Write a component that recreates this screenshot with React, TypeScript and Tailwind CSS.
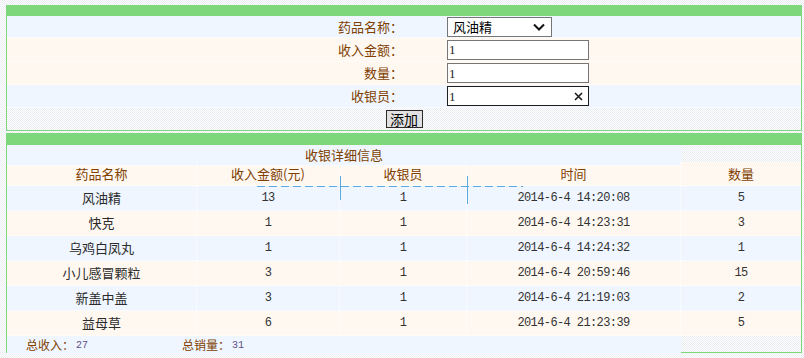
import React from 'react';

const cjk = "font-['Noto_Sans_CJK_SC','Liberation_Sans',sans-serif]";
const mono = "font-['Liberation_Mono',monospace]";

const records = [
  ['风油精', '13', '1', '2014-6-4 14:20:08', '5'],
  ['快克', '1', '1', '2014-6-4 14:23:31', '3'],
  ['乌鸡白凤丸', '1', '1', '2014-6-4 14:24:32', '1'],
  ['小儿感冒颗粒', '3', '1', '2014-6-4 20:59:46', '15'],
  ['新盖中盖', '3', '1', '2014-6-4 21:19:03', '2'],
  ['益母草', '6', '1', '2014-6-4 21:23:39', '5'],
];

function FormRow({ label, bg, h, children }: { label: string; bg: string; h: string; children: React.ReactNode }) {
  return (
    <div className={`grid grid-cols-[396px_1fr] ${h} ${bg} border-b border-dotted border-white`}>
      <div className={`${cjk} flex items-center justify-end text-[13px] text-[#804000]`}>{label}</div>
      <div className="flex items-center pl-[44px]">{children}</div>
    </div>
  );
}

function TextBox({ value, focused }: { value: string; focused?: boolean }) {
  return (
    <div
      className={`flex h-[20px] w-[142px] items-center justify-between border bg-white pl-[1px] pr-[5px] ${
        focused ? 'border-[#1e1e1e]' : 'border-[#767676]'
      }`}
    >
      <span className="font-['Liberation_Serif',serif] text-[13px] leading-none text-[#222]">{value}</span>
      {focused && (
        <svg width="9" height="9" viewBox="0 0 9 9">
          <path d="M1 1 L8 8 M8 1 L1 8" stroke="#1a1a1a" strokeWidth="1.6" />
        </svg>
      )}
    </div>
  );
}

export default function App() {
  const cols = 'grid grid-cols-[190px_143px_127px_214px_120px]';
  return (
    <div className="relative h-[358px] w-[804px] overflow-hidden bg-[repeating-conic-gradient(#ffffff_0_25%,#e9edf1_0_50%)] bg-[length:2px_2px] pl-[6px] pr-[2px] pt-[5px]">
      {/* form panel */}
      <div className="border border-[#7ed77a]">
        <div className="h-[10px] bg-[#7ed77a]" />
        <FormRow label="药品名称：" bg="bg-[#eff6ff]" h="h-[22px]">
          <div className="flex h-[20px] w-[105px] items-center justify-between border border-[#767676] bg-white pl-[5px] pr-[6px]">
            <span className={`${cjk} text-[13px] leading-none text-black`}>风油精</span>
            <svg width="12" height="8" viewBox="0 0 12 8">
              <path d="M1 1.5 L6 6.5 L11 1.5" fill="none" stroke="#111" strokeWidth="2" />
            </svg>
          </div>
        </FormRow>
        <FormRow label="收入金额：" bg="bg-[#fff8f1]" h="h-[24px]">
          <TextBox value="1" />
        </FormRow>
        <FormRow label="数量：" bg="bg-[#fff8f1]" h="h-[23px]">
          <TextBox value="1" />
        </FormRow>
        <FormRow label="收银员：" bg="bg-[#eff6ff]" h="h-[23px]">
          <TextBox value="1" focused />
        </FormRow>
        <div className="flex h-[22px] items-center justify-center">
          <button className={`${cjk} flex h-[18px] w-[37px] items-center justify-center border border-[#2a2a2a] bg-[#e1e1e1] text-[14px] leading-none text-black`}>
            添加
          </button>
        </div>
      </div>

      {/* detail panel */}
      <div className="mt-[2px] border border-[#7ed77a]">
        <div className="h-[11px] bg-[#7ed77a]" />
        <div className="grid h-[17px] grid-cols-[674px_120px]">
          <div className={`${cjk} flex items-center justify-center border-b border-dotted border-white bg-[#eff6ff] text-[13px] text-[#804000]`}>
            收银详细信息
          </div>
          <div />
        </div>
        <div className={`${cols} h-[24px] bg-[#fff8f1]`}>
          {['药品名称', '收入金额(元)', '收银员', '时间', '数量'].map((t, i) => (
            <div
              key={t}
              className={`${cjk} flex items-center justify-center border-b border-dotted border-white text-[13px] text-[#804000] ${
                i < 4 ? 'border-r' : ''
              }`}
            >
              {t}
            </div>
          ))}
        </div>
        {records.map((r, ri) => (
          <div key={ri} className={`${cols} h-[25px] ${ri % 2 === 0 ? 'bg-[#eff6ff]' : 'bg-[#fff8f1]'}`}>
            {r.map((c, i) => (
              <div
                key={i}
                className={`flex items-center justify-center border-b border-dotted border-white ${
                  i === 0 ? `${cjk} text-[13px] text-[#2b2b2b]` : `${mono} text-[12px] tracking-[-0.6px] text-[#333]`
                } ${i < 4 ? 'border-r' : ''}`}
              >
                {c}
              </div>
            ))}
          </div>
        ))}
        <div className="grid h-[16px] grid-cols-[674px_120px]">
          <div className="flex items-center bg-[#eff6ff] text-[12px] text-[#804000]">
            <span className={`${cjk} ml-[19px]`}>总收入：</span>
            <span className={`${mono} ml-[2px] text-[10px] text-[#5c4f86]`}>27</span>
            <span className={`${cjk} ml-[94px]`}>总销量：</span>
            <span className={`${mono} ml-[2px] text-[10px] text-[#5c4f86]`}>31</span>
          </div>
          <div />
        </div>
      </div>

      {/* guide lines drawn over the table */}
      <div className="pointer-events-none absolute left-[257px] top-[186px] h-px w-[266px] bg-[repeating-linear-gradient(90deg,#5aa8e0_0_8px,transparent_8px_12px)]" />
      <div className="pointer-events-none absolute left-[340px] top-[176px] h-[24px] w-px bg-[#5aa8e0]" />
      <div className="pointer-events-none absolute left-[467px] top-[176px] h-[28px] w-px bg-[#5aa8e0]" />
    </div>
  );
}
